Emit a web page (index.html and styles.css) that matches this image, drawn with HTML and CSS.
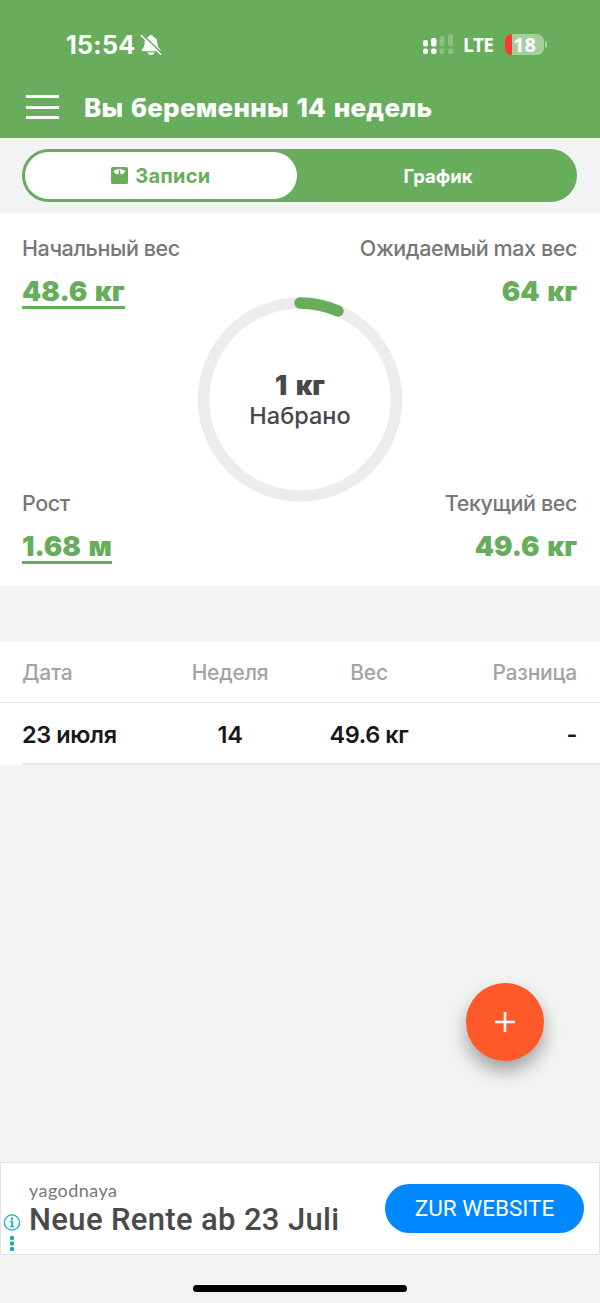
FILE: index.html
```html
<!DOCTYPE html>
<html lang="ru">
<head>
<meta charset="utf-8">
<title>Вес</title>
<link rel="stylesheet" href="styles.css">
</head>
<body>
<div class="app">
  <header class="header">
    <div class="status">
      <span class="clock">15:54</span>
      <svg class="bell" width="22" height="22" viewBox="0 0 22 22">
        <path d="M11 1c1.200 0 2 .7 2.300 1.700C16.200 3.700 17.300 6 17.400 9c.1 3.500 1 4.500 2.500 6 .9 1 .5 2.200-.9 2.200H3c-1.400 0-1.800-1.200-.9-2.200 1.500-1.500 2.400-2.500 2.500-6 .1-3 1.200-5.300 4.100-6.300C9 1.700 9.800 1 11 1z" fill="#fff"/>
        <path d="M7.500 18.500h7c-.5 1.600-1.800 2.500-3.500 2.500s-3-.9-3.500-2.500z" fill="#fff"/>
        <path d="M2.700.8 22 19.300" stroke="#67ad5b" stroke-width="1.600"/>
        <path d="M1.300 1.500 20.700 20.200" stroke="#fff" stroke-width="1.500" stroke-linecap="round"/>
      </svg>
      <svg class="signal" width="31" height="22" viewBox="0 0 31 22">
        <g fill="#fff"><rect x="0" y="6" width="5" height="6.500" rx="2"/><rect x="8" y="4" width="5.500" height="8.500" rx="2"/><rect x="0" y="14.500" width="5" height="5.500" rx="2"/><rect x="8" y="14.500" width="5.500" height="5.500" rx="2"/></g>
        <g fill="#fff" fill-opacity=".25"><rect x="16.500" y="2" width="5" height="10.500" rx="2"/><rect x="25" y="0" width="5" height="12.500" rx="2"/><rect x="16.500" y="14.500" width="5" height="5.500" rx="2"/><rect x="25" y="14.500" width="5" height="5.500" rx="2"/></g>
      </svg>
      <span class="network">LTE</span>
      <span class="battery">18</span>
      <span class="battery-tip"></span>
    </div>
    <div class="titlebar">
      <span class="menu"><i></i><i></i><i></i></span>
      <h1 class="title">Вы беременны 14 недель</h1>
    </div>
  </header>

  <nav class="tabs">
    <div class="switch">
      <div class="tab tab-active">
        <svg width="17" height="17" viewBox="0 0 17 17">
          <rect width="17" height="17" rx="1.500" fill="#67ad5b"/>
          <path d="M2.500 4C5.500 1.700 11.500 1.700 14.500 4L12 7.300H5z" fill="#fff"/>
          <path d="M8.500 3v3.500" stroke="#67ad5b" stroke-width="1.300"/>
          <circle cx="8.500" cy="7" r="1.200" fill="#67ad5b"/>
        </svg>
        <span>Записи</span>
      </div>
      <div class="tab tab-other">График</div>
    </div>
  </nav>

  <main class="summary">
    <div class="stats">
      <div class="stat"><span class="label">Начальный вес</span><span class="value link">48.6 кг</span></div>
      <div class="stat right"><span class="label">Ожидаемый max вес</span><span class="value">64 кг</span></div>
      <div class="stat"><span class="label">Рост</span><span class="value link">1.68 м</span></div>
      <div class="stat right"><span class="label">Текущий вес</span><span class="value">49.6 кг</span></div>
    </div>
    <div class="dial">
      <svg width="206" height="206" viewBox="0 0 206 206">
        <circle cx="103" cy="103.500" r="96.500" fill="none" stroke="#ececec" stroke-width="11.500"/>
        <path d="M103 7A96.500 96.500 0 0 1 141 15" fill="none" stroke="#67ad5b" stroke-width="11.500" stroke-linecap="round"/>
      </svg>
      <div class="dial-text"><strong>1 кг</strong><span>Набрано</span></div>
    </div>
  </main>

  <section class="table">
    <div class="row head"><span>Дата</span><span>Неделя</span><span>Вес</span><span>Разница</span></div>
    <div class="row entry"><span>23 июля</span><span>14</span><span>49.6 кг</span><span>-</span></div>
  </section>

  <div class="space">
    <button class="fab" aria-label="Добавить"><svg width="20" height="20" viewBox="0 0 20 20"><path d="M10 0v20M0 10h20" stroke="#fff" stroke-width="2.600"/></svg></button>
  </div>

  <aside class="ad">
    <div class="ad-marks">
      <svg width="18" height="40" viewBox="0 0 18 40">
        <circle cx="9" cy="9.500" r="7.600" fill="none" stroke="#19b2c9" stroke-width="1.400"/>
        <circle cx="9" cy="5.700" r="1.300" fill="#19b2c9"/>
        <path d="M7.300 8.700H9.200v5M7 13.500h4" stroke="#19b2c9" stroke-width="1.700" fill="none"/>
        <g fill="#19a9b8"><circle cx="9" cy="25" r="2.200"/><circle cx="9" cy="30.500" r="2.200"/><circle cx="9" cy="36" r="2.200"/></g>
      </svg>
    </div>
    <div class="ad-copy"><span class="ad-brand">yagodnaya</span><span class="ad-title">Neue Rente ab 23 Juli</span></div>
    <div class="ad-button">ZUR WEBSITE</div>
  </aside>
  <footer class="home"><span></span></footer>
</div>
</body>
</html>
```
FILE: styles.css
```css
* { box-sizing: border-box; }
body { margin: 0; font-family: Inter, "Noto Sans", sans-serif; background: #f2f4f2; }
.app { width: 600px; height: 1303px; display: flex; flex-direction: column; overflow: hidden; }
.header { height: 138px; flex: none; background: #67ad5b; color: #fff; }
.status { height: 76px; padding: 13px 53px 0 66px; display: flex; align-items: center; }
.clock { width: 68px; font-size: 25px; font-weight: 700; letter-spacing: 0.3px; line-height: 30px; }
.bell { margin-left: 6px; }
.signal { margin-left: auto; }
.network { margin-left: 9px; font: 700 19px/24px "Open Sans", sans-serif; letter-spacing: -0.8px; width: 32px; }
.battery { margin-left: 10px; width: 39px; height: 21px; border-radius: 7px; background: linear-gradient(90deg, #ff3b30 7px, #a5cf9e 7px); font: 700 20px/21px "Open Sans", sans-serif; text-align: center; }
.battery-tip { width: 2px; height: 7px; margin-left: 1px; border-radius: 0 2px 2px 0; background: #a5cf9e; }
.titlebar { height: 62px; padding-left: 26px; display: flex; align-items: center; gap: 25px; }
.menu { width: 33px; height: 24px; display: flex; flex-direction: column; justify-content: space-between; }
.menu i { height: 3px; background: #fff; }
.title { margin: 0; padding-top: 1px; font-size: 26px; font-weight: 800; line-height: 32px; letter-spacing: 0.25px; word-spacing: 1.5px; white-space: nowrap; }
.tabs { height: 75px; flex: none; padding: 11px 23px 0 22px; background: #f2f3f3; }
.switch { height: 53px; padding: 3px; border-radius: 26.5px; background: #67ad5b; display: flex; }
.tab { display: flex; align-items: center; justify-content: center; font-weight: 700; }
.tab-active { width: 272px; border-radius: 24px; background: #fff; color: #67ad5b; gap: 7px; font-size: 20px; letter-spacing: 0.3px; }
.tab-other { flex: 1; padding-left: 5px; color: #fff; font-size: 18.5px; }
.summary { height: 373px; flex: none; padding: 22px 23px 0 22px; background: #fff; position: relative; }
.stats { display: grid; grid-template-columns: 1fr 1fr; grid-template-rows: 255px 100px; }
.stat { display: flex; flex-direction: column; align-items: flex-start; gap: 15px; }
.right { align-items: flex-end; }
.label { font-size: 21.5px; line-height: 27px; font-weight: 450; letter-spacing: -0.4px; color: #777; white-space: nowrap; }
.value { height: 32px; font-size: 27.5px; line-height: 29px; font-weight: 900; word-spacing: 2px; color: #67ad5b; white-space: nowrap; }
.link { border-bottom: 3px solid #67ad5b; }
.dial { position: absolute; left: 197px; top: 83px; width: 206px; height: 206px; }
.dial svg { display: block; }
.dial-text { position: absolute; inset: 3px 0 0; display: flex; flex-direction: column; align-items: center; justify-content: center; color: #484848; }
.dial-text strong { font-size: 27px; line-height: 31px; font-weight: 900; word-spacing: 3px; }
.dial-text span { font-size: 23.5px; line-height: 30px; font-weight: 500; }
.table { flex: none; margin-top: 56px; background: #fff; }
.row { display: grid; grid-template-columns: 138px 140px 138px 1fr; align-items: center; text-align: center; }
.row span:first-child { text-align: left; }
.row span:last-child { text-align: right; }
.head { height: 61px; padding: 0 23px 0 22px; border-bottom: 1px solid #e3e3e3; color: #a3a3a3; font-size: 21px; font-weight: 500; letter-spacing: -0.2px; }
.entry { height: 62px; margin-left: 22px; padding: 3px 23px 0 0; border-bottom: 2px solid #e5e6e5; color: #181818; font-size: 23.5px; font-weight: 600; letter-spacing: -0.4px; }
.space { flex: 1; display: flex; justify-content: flex-end; align-items: flex-end; padding: 0 56px 101px 0; }
.fab { width: 78px; height: 78px; padding: 0; border: 0; border-radius: 50%; background: #ff5929; box-shadow: 0 10px 18px rgba(0,0,0,.34); display: flex; align-items: center; justify-content: center; }
.ad { height: 93px; flex: none; border: 1px solid #e2e4e2; background: #fff; display: flex; align-items: flex-start; }
.ad-marks { width: 28px; padding: 50px 0 0 2px; }
.ad-copy { width: 356px; padding-top: 16px; display: flex; flex-direction: column; white-space: nowrap; }
.ad-brand { font: 400 18px/22px Lato, sans-serif; letter-spacing: 0.45px; color: #777; }
.ad-title { margin-top: 1px; font: 500 31px/36px Roboto, sans-serif; letter-spacing: 0.35px; color: #4a4a4a; }
.ad-button { width: 199px; height: 49px; margin-top: 21px; border-radius: 25px; background: #0088ff; color: #fff; font: 450 22.5px/48px Roboto, sans-serif; text-align: center; }
.home { height: 48px; flex: none; padding-top: 30px; display: flex; justify-content: center; }
.home span { width: 214px; height: 7px; border-radius: 4px; background: #000; }
```
